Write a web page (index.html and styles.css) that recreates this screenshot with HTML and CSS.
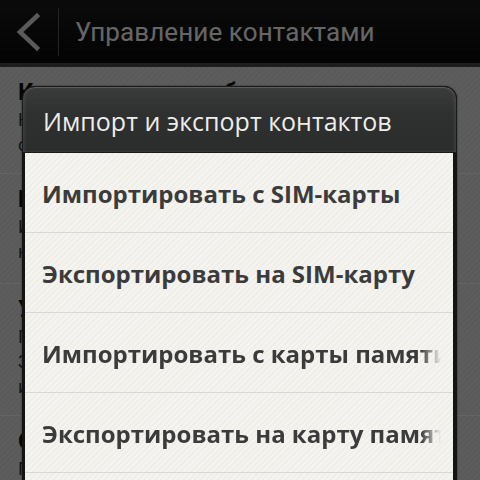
FILE: index.html
```html
<!DOCTYPE html>
<html lang="ru">
<head>
<meta charset="utf-8">
<title>Управление контактами</title>
<link rel="stylesheet" href="styles.css">
</head>
<body>
<div class="screen">
  <div class="page">
    <header class="bar">
      <div class="back">
        <svg width="40" height="56" viewBox="0 0 40 56"><polyline points="37,12 20,28 37,44" fill="none" stroke="#e2e2e2" stroke-width="4.5" stroke-linecap="square"/></svg>
      </div>
      <div class="bar-sep"></div>
      <div class="bar-title">Управление контактами</div>
    </header>
    <ul class="settings">
      <li class="setting">
        <div class="s-title">Контакты для отображения</div>
        <div class="s-sub">Настройка отображения контактов из<br>списка всех учетных записей телефона</div>
      </li>
      <li class="setting s2">
        <div class="s-title">Импорт/экспорт контактов</div>
        <div class="s-sub">Импорт или экспорт контактов с SIM-<br>карты или карты памяти телефона</div>
      </li>
      <li class="setting">
        <div class="s-title">Удалить повторяющиеся</div>
        <div class="s-sub">Поиск повторяющихся контактов и связей<br>Записи с одинаковыми именами будут<br>их можно объединить в одну запись</div>
      </li>
      <li class="setting">
        <div class="s-title">Объединить контакты</div>
        <div class="s-sub">Показать предложения по связыванию</div>
      </li>
    </ul>
  </div>
  <div class="scrim"></div>
  <div class="dialog">
    <div class="d-head">Импорт и экспорт контактов</div>
    <ul class="d-list">
      <li class="d-item"><span class="d-text">Импортировать с SIM-карты</span></li>
      <li class="d-item"><span class="d-text">Экспортировать на SIM-карту</span></li>
      <li class="d-item"><span class="d-text fade">Импортировать с карты памяти</span></li>
      <li class="d-item"><span class="d-text fade">Экспортировать на карту памяти</span></li>
      <li class="d-item"><span class="d-text fade">Импортировать из хранилища</span></li>
    </ul>
  </div>
</div>
</body>
</html>
```
FILE: styles.css
```css
* { box-sizing: border-box; }
html, body { margin: 0; padding: 0; }
body {
  width: 480px;
  height: 480px;
  overflow: hidden;
  font-family: Roboto, "Noto Sans", "DejaVu Sans", sans-serif;
  background: #000;
}
ul { list-style: none; margin: 0; padding: 0; }

.screen {
  position: relative;
  width: 480px;
  height: 480px;
  overflow: hidden;
}

.page {
  height: 100%;
  background: repeating-linear-gradient(135deg, #e9e9e9 0 2px, #e2e2e2 2px 4px);
}

.bar {
  height: 67px;
  display: flex;
  align-items: center;
  background: linear-gradient(#1c1c1c, #0c0c0c 85%);
  border-bottom: 4px solid #4a4a4a;
}
.back {
  width: 58px;
  height: 56px;
  display: flex;
  align-items: center;
}
.back svg { display: block; }
.bar-sep {
  width: 1px;
  height: 48px;
  background: #5a5a5a;
}
.bar-title {
  margin-left: 16px;
  font-size: 26px;
  color: #ffffff;
  white-space: nowrap;
  letter-spacing: 0.1px;
}

.setting {
  padding: 10px 18px 16px;
  border-bottom: 1px solid #fafafa;
  white-space: nowrap;
}
.s2 { padding-bottom: 19px; }
.s-title {
  font-size: 24px;
  font-weight: 700;
  line-height: 30px;
  color: #111;
}
.s-sub {
  font-size: 18px;
  line-height: 25px;
  color: #333;
}

.scrim {
  position: absolute;
  inset: 0;
  background: rgba(0, 0, 0, 0.6);
}

.dialog {
  position: absolute;
  left: 22px;
  top: 86px;
  width: 435px;
  height: 420px;
  background: #141414;
  border-radius: 13px 13px 0 0;
  padding: 0 4px 0 3px;
  box-shadow: 0 0 2px rgba(0,0,0,0.6);
  font-family: "Open Sans", Roboto, sans-serif;
}
.d-head {
  height: 67px;
  margin: 0 -4px 0 -3px;
  padding: 2px 20px 0;
  display: flex;
  align-items: center;
  font-size: 25px;
  color: #ededea;
  white-space: nowrap;
  border-radius: 13px 13px 0 0;
  background: linear-gradient(#3a3b3b, #2f3030 40%, #2b2c2c);
  border: 1px solid #1a1a1a;
  box-shadow: inset 0 1px 0 #5c5c5c, inset 2px 0 3px rgba(255,255,255,0.08), inset -2px 0 3px rgba(255,255,255,0.08);
}
.d-list {
  background: repeating-linear-gradient(135deg, #f5f4f0 0 2px, #efeee9 2px 4px);
}
.d-item {
  height: 80px;
  padding: 0 12px 0 17px;
  display: flex;
  align-items: center;
  border-bottom: 1px solid #d8d8d5;
}
.d-text {
  display: block;
  width: 100%;
  overflow: hidden;
  white-space: nowrap;
  font-size: 24px;
  font-weight: 700;
  color: #3b3b3b;
  padding-top: 2px;
}
.d-text.fade {
  -webkit-mask-image: linear-gradient(to right, #000 calc(100% - 20px), transparent);
  mask-image: linear-gradient(to right, #000 calc(100% - 20px), transparent);
}
```
